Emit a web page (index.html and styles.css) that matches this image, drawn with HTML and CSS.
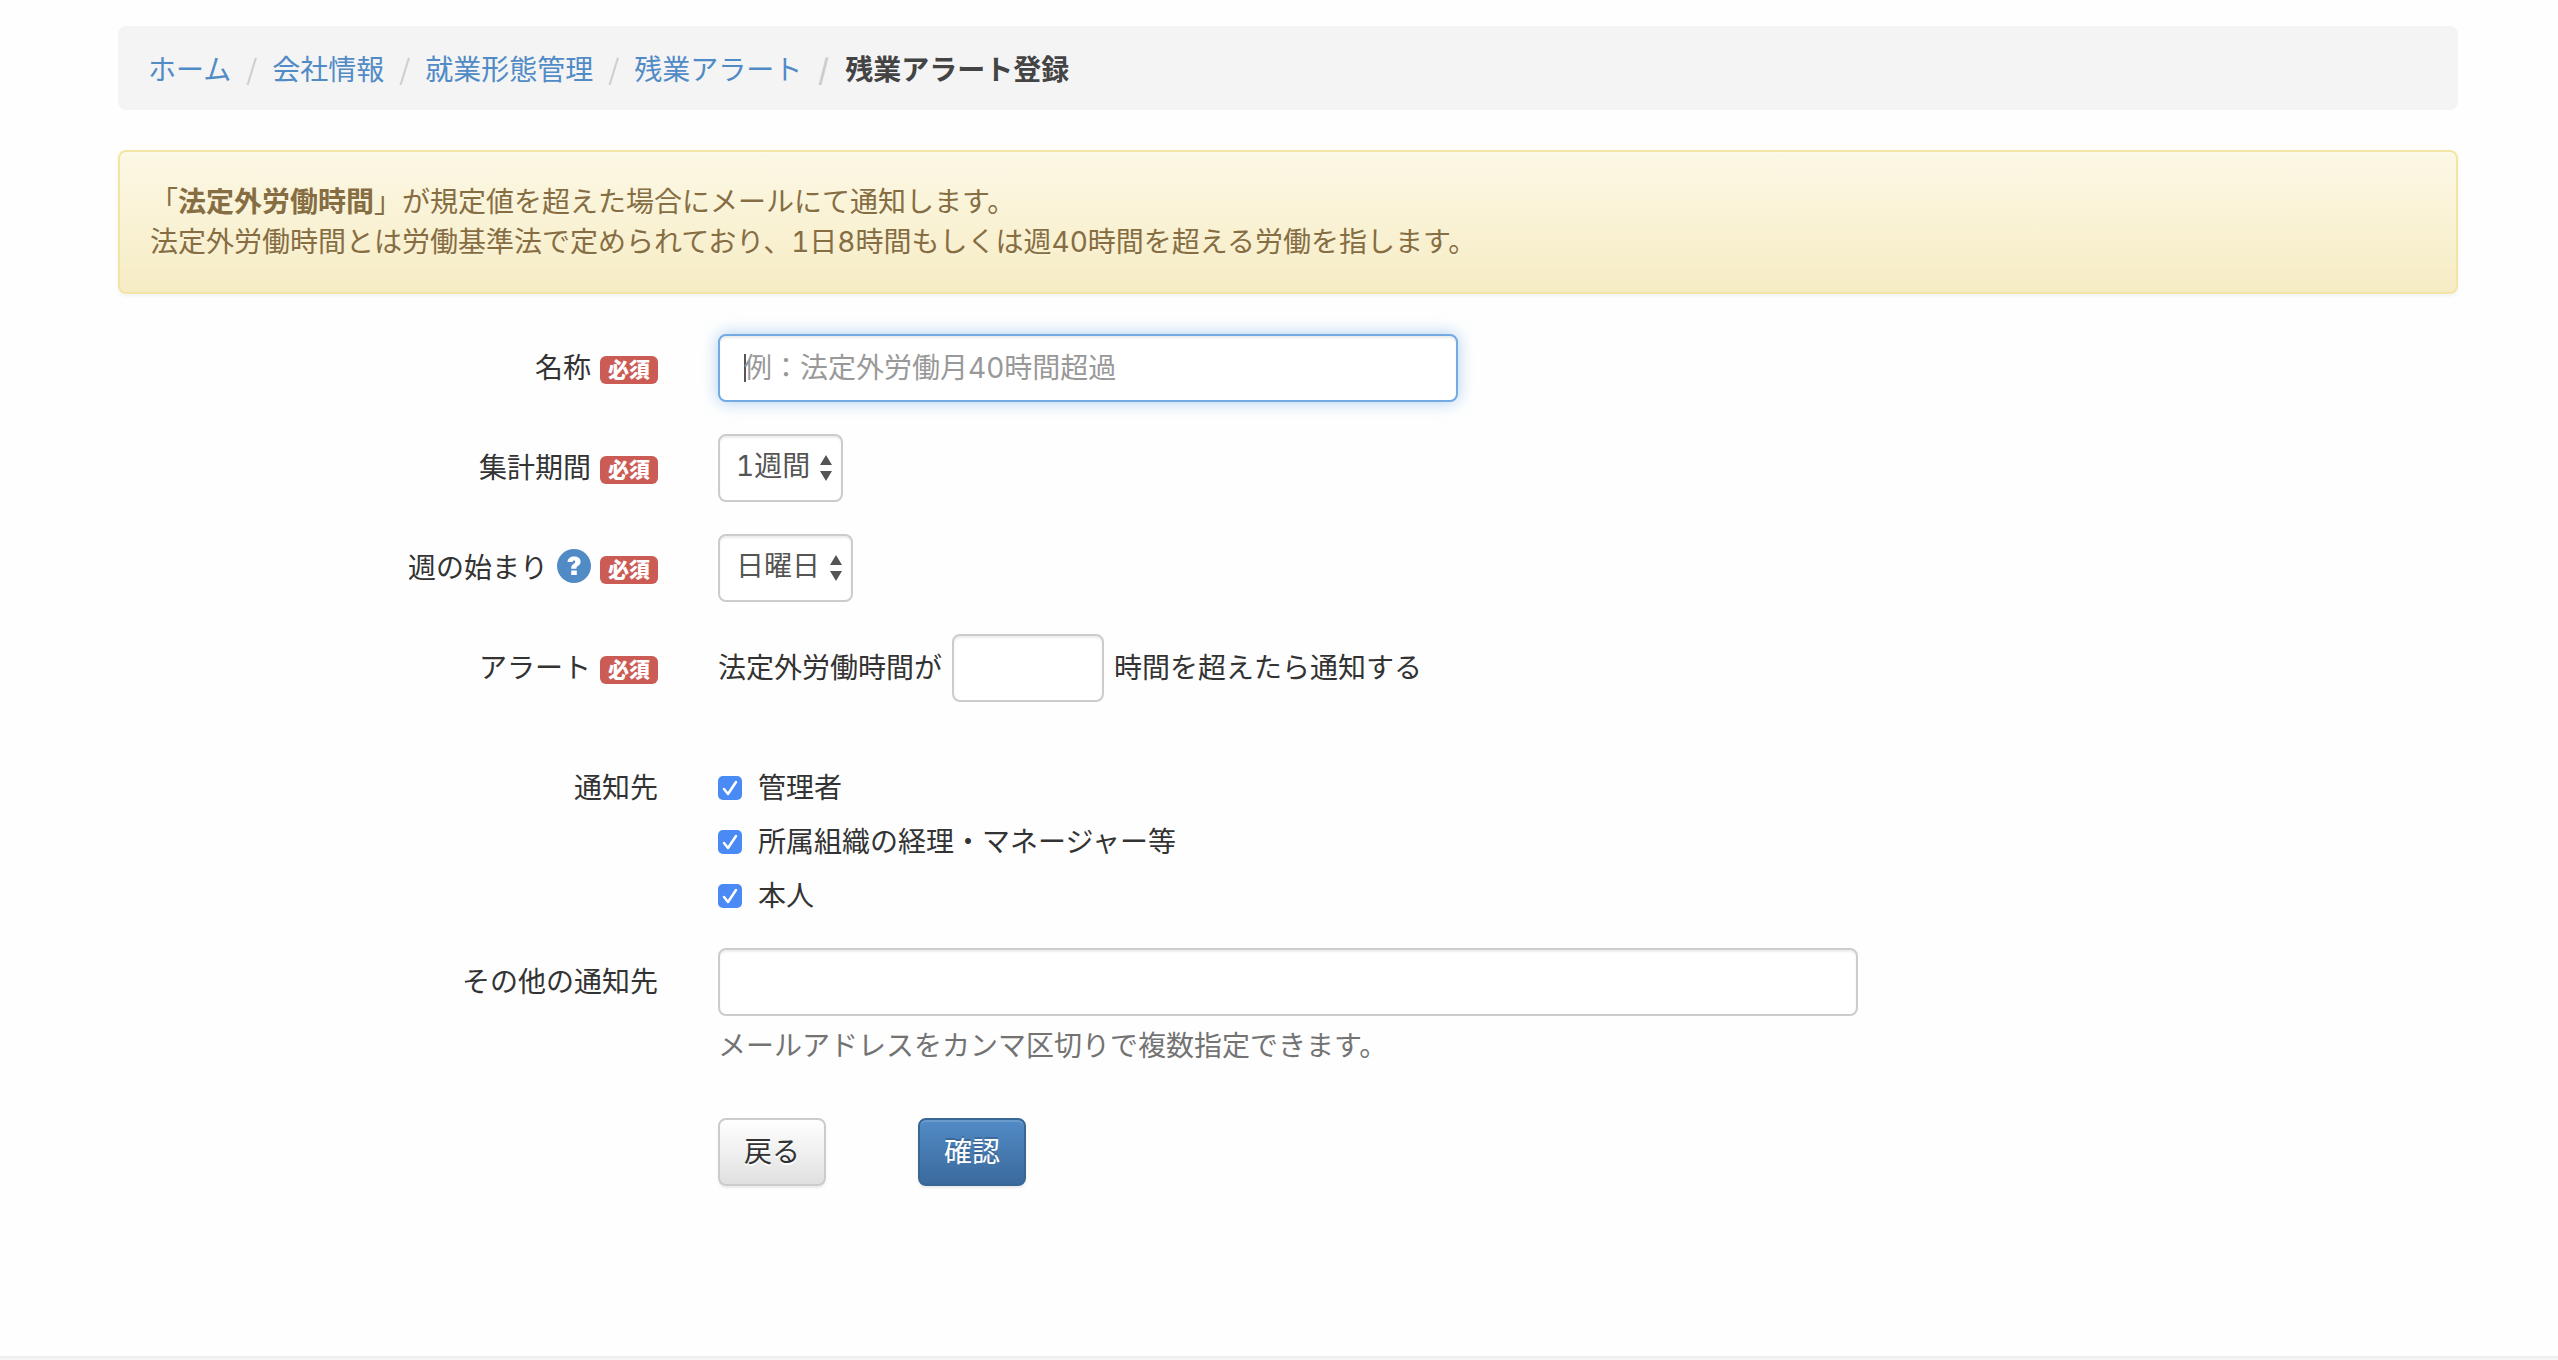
FILE: index.html
```html
<!DOCTYPE html>
<html lang="ja">
<head>
<meta charset="utf-8">
<title>残業アラート登録</title>
<link rel="stylesheet" href="styles.css">
</head>
<body>
<main class="page">
  <nav aria-label="パンくず">
    <ol class="breadcrumb">
      <li><a href="#">ホーム</a></li>
      <li><a href="#">会社情報</a></li>
      <li><a href="#">就業形態管理</a></li>
      <li><a href="#">残業アラート</a></li>
      <li class="active">残業アラート登録</li>
    </ol>
  </nav>

  <p class="notice">「<strong>法定外労働時間</strong>」が規定値を超えた場合にメールにて通知します。<br>法定外労働時間とは労働基準法で定められており、1日8時間もしくは週40時間を超える労働を指します。</p>

  <form class="form">
    <div class="row">
      <div class="label"><label for="name">名称</label><span class="required">必須</span></div>
      <input class="control control-name" id="name" type="text" placeholder="例：法定外労働月40時間超過">
    </div>

    <div class="row">
      <div class="label"><label for="period">集計期間</label><span class="required">必須</span></div>
      <div class="field">
        <select class="control select" id="period"><option>1週間</option></select>
      </div>
    </div>

    <div class="row">
      <div class="label">
        <label for="weekstart">週の始まり</label>
        <svg class="help-icon" viewBox="0 0 34 34" role="img" aria-label="ヘルプ">
          <circle cx="17" cy="17" r="17" fill="#518bc6"/>
          <path d="M10.500 13C10.800 9.500 13.300 7.500 17.200 7.500c3.900 0 6.400 2 6.400 5.100 0 2.200-1 3.400-2.600 4.400-1.300.8-1.600 1.300-1.600 2.800h-5.200c0-2.700.6-4 2.500-5.100 1.100-.7 1.500-1.100 1.500-1.900 0-.8-.5-1.300-1.200-1.300-.9 0-1.400.5-1.500 1.500zM14.200 21.500h5.600v4.500h-5.600z" fill="#fff"/>
        </svg>
        <span class="required">必須</span>
      </div>
      <div class="field">
        <select class="control select" id="weekstart"><option>日曜日</option></select>
      </div>
    </div>

    <div class="row">
      <div class="label"><label for="hours">アラート</label><span class="required">必須</span></div>
      <div class="field field-inline">
        <span>法定外労働時間が</span>
        <input class="control control-hours" id="hours" type="text">
        <span>時間を超えたら通知する</span>
      </div>
    </div>

    <div class="row row-targets" role="group" aria-labelledby="targets">
      <div class="label" id="targets">通知先</div>
      <div class="field checks">
        <label class="check"><input type="checkbox" checked>管理者</label>
        <label class="check"><input type="checkbox" checked>所属組織の経理・マネージャー等</label>
        <label class="check"><input type="checkbox" checked>本人</label>
      </div>
    </div>

    <div class="row">
      <div class="label"><label for="others">その他の通知先</label></div>
      <div class="field-wide">
        <input class="control" id="others" type="text" aria-describedby="others-help">
        <p class="help" id="others-help">メールアドレスをカンマ区切りで複数指定できます。</p>
      </div>
    </div>

    <div class="row row-actions">
      <div class="field actions">
        <button class="btn" type="button">戻る</button>
        <button class="btn btn-primary" type="button">確認</button>
      </div>
    </div>
  </form>
</main>
<footer class="footer"></footer>
</body>
</html>
```
FILE: styles.css
```css
* {
  box-sizing: border-box;
}

body {
  margin: 0;
  min-height: 100vh;
  display: flex;
  flex-direction: column;
  background: #fefefe;
  color: #333;
  font: 28px/40px Inter, "Noto Sans CJK JP", sans-serif;
  font-variant-numeric: tabular-nums;
}

.page {
  flex: 1;
  padding: 26px 100px 40px 118px;
}

/* Breadcrumb */
.breadcrumb {
  display: flex;
  flex-wrap: wrap;
  margin: 0 0 40px;
  padding: 22px 30px;
  list-style: none;
  border-radius: 8px;
  background: #f4f4f4;
  font-family: "Noto Sans CJK JP", sans-serif;
}

.breadcrumb li {
  display: flex;
}

.breadcrumb li + li::before {
  content: "/";
  width: 41px;
  text-align: center;
  color: #ccc;
}

.breadcrumb a {
  color: #518bc6;
  text-decoration: none;
}

.breadcrumb .active {
  color: #444;
  font-weight: bold;
}

.breadcrumb .active::before {
  width: 43px;
}

/* Notice */
.notice {
  margin: 0 0 40px;
  padding: 30px;
  border: 2px solid #f3e5a4;
  border-radius: 8px;
  background: linear-gradient(#fcf8e5, #f6ecc4);
  box-shadow: inset 0 2px 0 rgba(255, 255, 255, .25), 0 2px 4px rgba(0, 0, 0, .05);
  color: #866d42;
  text-shadow: 0 2px 0 rgba(255, 255, 255, .2);
}

/* Form */
.row {
  display: grid;
  grid-template-columns: repeat(12, 1fr);
  column-gap: 60px;
  margin-bottom: 32px;
}

.label {
  grid-column: span 3;
  display: flex;
  justify-content: flex-end;
  align-items: center;
  gap: 9px;
  height: 68px;
}

.required {
  margin-top: 4px;
  padding: 0 8px;
  border-radius: 6px;
  background: #cb5b55;
  color: #fff;
  font-size: 21px;
  font-weight: 900;
  line-height: 28px;
}

.help-icon {
  width: 34px;
  height: 34px;
  margin-top: -4px;
}

.field {
  grid-column: span 9;
}

.field-wide {
  grid-column: span 6;
}

.field-inline {
  display: flex;
  align-items: center;
  gap: 10px;
}

.control {
  display: block;
  width: 100%;
  height: 68px;
  padding: 12px 24px;
  border: 2px solid #ccc;
  border-radius: 8px;
  outline: 0;
  background-color: #fff;
  box-shadow: inset 0 2px 2px rgba(0, 0, 0, .075);
  color: #555;
  font: inherit;
}

.control::placeholder {
  color: #999;
  opacity: 1;
}

/* The name field is shown in its focused state, with the caret at its start */
.control-name {
  grid-column: span 4;
  border-color: #72aae3;
  background: linear-gradient(#555, #555) 24px 18px / 2px 28px no-repeat #fff;
  box-shadow: inset 0 2px 2px rgba(0, 0, 0, .075), 0 0 16px rgba(114, 174, 232, .6);
}

.control-hours {
  width: 152px;
}

.select {
  width: auto;
  padding: 8px 30px 12px 16px;
  appearance: none;
  background: url("data:image/svg+xml,%3Csvg xmlns='http://www.w3.org/2000/svg' width='14' height='26'%3E%3Cpath d='M7 0l6 10H1zM7 26l6-10H1z' fill='%23555'/%3E%3C/svg%3E") right 8px center no-repeat #fff;
}

.row-targets {
  margin-top: 66px;
}

.row-targets .label {
  height: 40px;
}

.checks {
  display: grid;
  gap: 14px;
}

.check {
  display: flex;
  align-items: center;
  gap: 16px;
}

.check input {
  width: 24px;
  height: 24px;
  margin: 0;
  appearance: none;
  border-radius: 5px;
  background: #4a8af4 url("data:image/svg+xml,%3Csvg xmlns='http://www.w3.org/2000/svg' width='24' height='24'%3E%3Cpath d='M6 13l4 5 8-12' fill='none' stroke='%23fff' stroke-width='2.500' stroke-linecap='round' stroke-linejoin='round'/%3E%3C/svg%3E") center no-repeat;
}

.help {
  margin: 10px 0 0;
  color: #737373;
}

.row-actions {
  margin-top: 52px;
}

.actions {
  grid-column: 4 / span 9;
  display: flex;
  gap: 92px;
}

.btn {
  height: 68px;
  padding: 12px 24px;
  border: 2px solid #ccc;
  border-radius: 8px;
  background: linear-gradient(#fff, #e0e0e0);
  box-shadow: inset 0 2px 0 rgba(255, 255, 255, .15), 0 2px 2px rgba(0, 0, 0, .075);
  color: #333;
  font: inherit;
  text-shadow: 0 2px 0 #fff;
}

.btn-primary {
  border-color: #396795;
  background: linear-gradient(#518bc6, #3b6a9d);
  color: #fff;
  text-shadow: 0 -2px 0 rgba(0, 0, 0, .2);
}

.footer {
  height: 4px;
  border-top: 2px solid #eee;
  background: #f5f5f5;
}
```
